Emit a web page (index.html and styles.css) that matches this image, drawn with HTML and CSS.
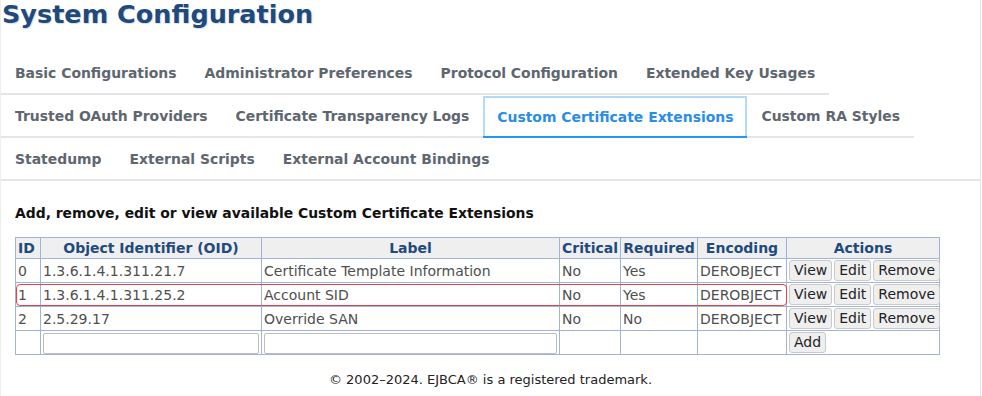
FILE: index.html
```html
<!DOCTYPE html>
<html lang="en">
<head>
  <meta charset="UTF-8">
  <meta name="viewport" content="width=device-width, initial-scale=1.0">
  <title>System Configuration</title>
  <link rel="stylesheet" href="styles.css">
</head>
<body>

<div class="page">
  <h1>System Configuration</h1>

  <ul class="tabs">
    <li><a href="#">Basic Configurations</a></li>
    <li><a href="#">Administrator Preferences</a></li>
    <li><a href="#">Protocol Configuration</a></li>
    <li><a href="#">Extended Key Usages</a></li>
    <li><a href="#">Trusted OAuth Providers</a></li>
    <li><a href="#">Certificate Transparency Logs</a></li>
    <li class="active"><a href="#">Custom Certificate Extensions</a></li>
    <li><a href="#">Custom RA Styles</a></li>
    <li><a href="#">Statedump</a></li>
    <li><a href="#">External Scripts</a></li>
    <li class="last"><a href="#">External Account Bindings</a></li>
  </ul>

  <h3>Add, remove, edit or view available Custom Certificate Extensions</h3>

  <div class="table-wrap">
    <table class="grid">
      <colgroup>
        <col class="col-id">
        <col class="col-oid">
        <col class="col-label">
        <col class="col-crit">
        <col class="col-req">
        <col class="col-enc">
        <col class="col-act">
      </colgroup>
      <thead>
        <tr>
          <th class="left">ID</th>
          <th>Object Identifier (OID)</th>
          <th>Label</th>
          <th>Critical</th>
          <th>Required</th>
          <th>Encoding</th>
          <th>Actions</th>
        </tr>
      </thead>
      <tbody>
        <tr>
          <td>0</td>
          <td>1.3.6.1.4.1.311.21.7</td>
          <td>Certificate Template Information</td>
          <td>No</td>
          <td>Yes</td>
          <td>DEROBJECT</td>
          <td class="actions"><button>View</button><button>Edit</button><button>Remove</button></td>
        </tr>
        <tr>
          <td>1</td>
          <td>1.3.6.1.4.1.311.25.2</td>
          <td>Account SID</td>
          <td>No</td>
          <td>Yes</td>
          <td>DEROBJECT</td>
          <td class="actions"><button>View</button><button>Edit</button><button>Remove</button></td>
        </tr>
        <tr>
          <td>2</td>
          <td>2.5.29.17</td>
          <td>Override SAN</td>
          <td>No</td>
          <td>No</td>
          <td>DEROBJECT</td>
          <td class="actions"><button>View</button><button>Edit</button><button>Remove</button></td>
        </tr>
        <tr>
          <td></td>
          <td><input type="text" class="field"></td>
          <td><input type="text" class="field"></td>
          <td></td>
          <td></td>
          <td></td>
          <td class="actions"><button>Add</button></td>
        </tr>
      </tbody>
    </table>
    <span class="highlight"></span>
  </div>

  <footer class="footer">&copy; 2002&ndash;2024. EJBCA&reg; is a registered trademark.</footer>
</div>

</body>
</html>
```

FILE: styles.css
```css
body {
  margin: 0;
  font-family: 'DejaVu Sans', Verdana, sans-serif;
  background-color: #fff;
  color: #222;
}

.page {
  width: 979px;
  border-left: 1px solid #eeeeee;
  border-right: 1px solid #e8e8e8;
  padding-bottom: 12px;
}

h1 {
  margin: 0 0 24px 1px;
  font-size: 25.5px;
  line-height: 28px;
  color: #1f4a7e;
  text-shadow: 1px 1px 1px #d8dde4;
}

.tabs {
  list-style: none;
  margin: 0;
  padding: 0;
  display: flex;
  flex-wrap: wrap;
}

.tabs li {
  border-bottom: 2px solid #e2e6eb;
}

.tabs li.last {
  flex-grow: 1;
}

.tabs a {
  display: block;
  padding: 12px 14px 11px 14px;
  font-size: 13.93px;
  line-height: 18px;
  font-weight: bold;
  color: #5e6670;
  text-decoration: none;
}

.tabs li.active {
  border-bottom-color: #2196f3;
}

.tabs li.active a {
  margin-top: 1px;
  padding: 10px 12px 10px 12px;
  border: 2px solid #b3dafb;
  border-bottom: 0;
  color: #2a8de8;
}

h3 {
  margin: 23px 0 15px 14px;
  font-size: 13.9px;
  line-height: 18px;
  color: #111;
}

.table-wrap {
  position: relative;
  margin-left: 14px;
  width: 924px;
}

.grid {
  border-collapse: collapse;
  table-layout: fixed;
  width: 924px;
  font-size: 14px;
}

.col-id { width: 25px; }
.col-oid { width: 221px; }
.col-label { width: 298px; }
.col-crit { width: 61px; }
.col-req { width: 77px; }
.col-enc { width: 89px; }
.col-act { width: 153px; }

.grid th,
.grid td {
  border: 1px solid #9fb4d6;
  padding: 0 2px;
  overflow: hidden;
  white-space: nowrap;
}

.grid th {
  background-color: #efefef;
  color: #1f4a7e;
  font-weight: bold;
  height: 20px;
  text-align: center;
  padding: 0 1px;
}

.grid th.left {
  text-align: left;
  padding-left: 2px;
}

.grid td {
  color: #4f4f4f;
  height: 23px;
}

.grid td.actions {
  overflow: visible;
}

.actions button {
  font-family: 'DejaVu Sans', Verdana, sans-serif;
  font-size: 14px;
  line-height: 17px;
  color: #222;
  background-color: #efefef;
  border: 1px solid #c9c9c9;
  border-radius: 3px;
  padding: 1px 4px;
  margin-right: 2px;
  cursor: pointer;
}

.field {
  width: 100%;
  box-sizing: border-box;
  height: 21px;
  border: 1px solid #bdbdbd;
  border-radius: 2px;
  margin-top: 1px;
}

.highlight {
  position: absolute;
  left: 1px;
  top: 47px;
  width: 769px;
  height: 20px;
  border: 1px solid #e2434d;
  border-radius: 4px;
  pointer-events: none;
}

.footer {
  margin-top: 16px;
  text-align: center;
  font-size: 13px;
  line-height: 18px;
  color: #222;
}
```
